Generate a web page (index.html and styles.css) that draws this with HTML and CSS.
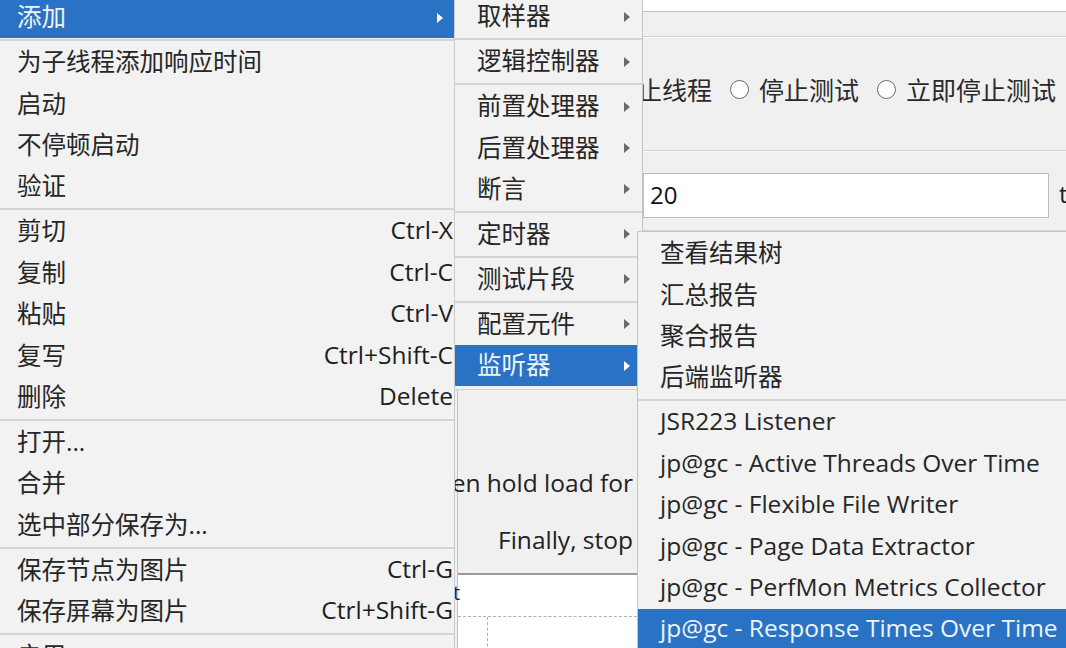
FILE: index.html
```html
<!DOCTYPE html>
<html lang="zh-CN">
<head>
<meta charset="utf-8">
<title>JMeter 菜单</title>
<link rel="stylesheet" href="styles.css">
</head>
<body>
<div class="app">
  <div class="col-hidden"></div>
  <div class="col-mid">
    <div class="mid-text first"><span>Then hold load for</span></div>
    <div class="mid-text second"><span>Finally, stop</span></div>
    <div class="mid-panel">
      <div class="panel-label">t</div>
      <div class="dotted-h"></div>
      <div class="dotted-v"></div>
    </div>
  </div>
  <div class="col-right">
    <div class="field-top"></div>
    <div class="sec sec-radio">
      <span class="rlabel cut">停止线程</span>
      <span class="radio"></span><span class="rlabel">停止测试</span>
      <span class="radio"></span><span class="rlabel">立即停止测试</span>
    </div>
    <div class="sec sec-input">
      <div class="input">20</div>
      <span class="unit">t</span>
    </div>
    <div class="sec sec-rest"></div>
  </div>
</div>

<div class="menu menu-main">
  <div class="item active"><span class="label">添加</span><span class="arrow"></span></div>
  <div class="sep"></div>
  <div class="item"><span class="label">为子线程添加响应时间</span></div>
  <div class="item"><span class="label">启动</span></div>
  <div class="item"><span class="label">不停顿启动</span></div>
  <div class="item"><span class="label">验证</span></div>
  <div class="sep"></div>
  <div class="item"><span class="label">剪切</span><span class="key">Ctrl-X</span></div>
  <div class="item"><span class="label">复制</span><span class="key">Ctrl-C</span></div>
  <div class="item"><span class="label">粘贴</span><span class="key">Ctrl-V</span></div>
  <div class="item"><span class="label">复写</span><span class="key">Ctrl+Shift-C</span></div>
  <div class="item"><span class="label">删除</span><span class="key">Delete</span></div>
  <div class="sep"></div>
  <div class="item"><span class="label">打开...</span></div>
  <div class="item"><span class="label">合并</span></div>
  <div class="item"><span class="label">选中部分保存为...</span></div>
  <div class="sep"></div>
  <div class="item"><span class="label">保存节点为图片</span><span class="key">Ctrl-G</span></div>
  <div class="item"><span class="label">保存屏幕为图片</span><span class="key">Ctrl+Shift-G</span></div>
  <div class="sep"></div>
  <div class="item"><span class="label">启用</span></div>
</div>

<div class="menu menu-sub1">
  <div class="item"><span class="label">取样器</span><span class="arrow"></span></div>
  <div class="sep"></div>
  <div class="item"><span class="label">逻辑控制器</span><span class="arrow"></span></div>
  <div class="sep"></div>
  <div class="item"><span class="label">前置处理器</span><span class="arrow"></span></div>
  <div class="item"><span class="label">后置处理器</span><span class="arrow"></span></div>
  <div class="item"><span class="label">断言</span><span class="arrow"></span></div>
  <div class="sep"></div>
  <div class="item"><span class="label">定时器</span><span class="arrow"></span></div>
  <div class="sep"></div>
  <div class="item"><span class="label">测试片段</span><span class="arrow"></span></div>
  <div class="sep"></div>
  <div class="item"><span class="label">配置元件</span><span class="arrow"></span></div>
  <div class="item active"><span class="label">监听器</span><span class="arrow"></span></div>
</div>

<div class="menu menu-sub2">
  <div class="item"><span class="label">查看结果树</span></div>
  <div class="item"><span class="label">汇总报告</span></div>
  <div class="item"><span class="label">聚合报告</span></div>
  <div class="item"><span class="label">后端监听器</span></div>
  <div class="sep"></div>
  <div class="item"><span class="label">JSR223 Listener</span></div>
  <div class="item"><span class="label">jp@gc - Active Threads Over Time</span></div>
  <div class="item"><span class="label">jp@gc - Flexible File Writer</span></div>
  <div class="item"><span class="label">jp@gc - Page Data Extractor</span></div>
  <div class="item"><span class="label">jp@gc - PerfMon Metrics Collector</span></div>
  <div class="item active"><span class="label">jp@gc - Response Times Over Time</span></div>
</div>
</body>
</html>
```

FILE: styles.css
```css
* { box-sizing: border-box; }

html, body {
  margin: 0;
  padding: 0;
}

body {
  width: 1066px;
  height: 648px;
  overflow: hidden;
  position: relative;
  background: #f0f0f0;
  font-family: "Open Sans", "Noto Sans CJK SC", sans-serif;
  font-size: 24.5px;
  color: #222;
}

/* ---------- background application ---------- */
.app {
  display: flex;
  height: 648px;
}

.col-hidden {
  width: 457px;
  flex: none;
}

.col-mid {
  width: 186px;
  flex: none;
  display: flex;
  flex-direction: column;
  border-left: 1px solid #c4c4c4;
}

.mid-text {
  height: 32px;
  display: flex;
  justify-content: flex-end;
  align-items: center;
  padding-right: 10px;
  padding-bottom: 3px;
  white-space: nowrap;
}

.mid-text.first { margin-top: 468px; }
.mid-text.second { margin-top: 25px; }

.mid-panel {
  margin-top: 16px;
  flex: 1;
  background: #fff;
  border-top: 2px solid #9a9a9a;
  position: relative;
}

.panel-label {
  height: 41px;
  font-size: 20px;
  line-height: 36px;
  margin-left: -5px;
}

.dotted-h {
  border-top: 1px dashed #b0b0b0;
  margin-right: 6px;
}

.dotted-v {
  margin-left: 29px;
  width: 0;
  height: 40px;
  border-left: 1px dashed #b0b0b0;
}

.col-right {
  flex: 1;
  display: flex;
  flex-direction: column;
}

.field-top {
  height: 12px;
  background: #fff;
  border-bottom: 1px solid #c0c0c0;
}

.sec {
  border-top: 1px solid #d2d2d2;
  box-shadow: inset 0 1px 0 #fafafa;
}

.sec-radio {
  margin-top: 24px;
  height: 114px;
  display: flex;
  align-items: center;
  font-size: 25px;
  color: #2a2a2a;
  padding-bottom: 10px;
}

.rlabel.cut { margin-left: -31px; }

.radio {
  width: 19px;
  height: 19px;
  border: 1.5px solid #6a6a6a;
  border-radius: 50%;
  margin-left: 18px;
  margin-right: 10px;
  margin-top: 2px;
  background: #fff;
  flex: none;
}

.sec-input {
  height: 80px;
  display: flex;
  align-items: flex-start;
  padding-top: 22px;
}

.input {
  width: 406px;
  height: 45px;
  background: #fff;
  border: 1px solid #bdbdbd;
  padding-left: 6px;
  padding-bottom: 2px;
  display: flex;
  align-items: center;
  font-size: 24px;
  color: #111;
}

.unit {
  margin-left: 10px;
  line-height: 42px;
}

.sec-rest { flex: 1; }

/* ---------- popup menus ---------- */
.menu {
  position: absolute;
  background: #f2f2f2;
  z-index: 2;
}

.menu-main {
  left: 0;
  top: -3px;
  width: 455px;
  border-right: 1px solid #c8c8c8;
}

.menu-sub1 {
  left: 454px;
  top: -4px;
  width: 189px;
  border-left: 1px solid #cdcdcd;
  border-right: 1px solid #c4c4c4;
  border-bottom: 1px solid #d4d4d4;
  padding-bottom: 3px;
  z-index: 3;
}

.menu-sub2 {
  left: 637px;
  top: 231px;
  width: 460px;
  border-left: 1px solid #c4c4c4;
  border-top: 1px solid #c8c8c8;
  padding-top: 1px;
  z-index: 4;
}

.item {
  height: 41.4px;
  display: flex;
  align-items: center;
  justify-content: space-between;
  white-space: nowrap;
  color: #262626;
  padding-bottom: 4px;
}

.menu-main .item { padding-left: 17px; padding-right: 1px; }
.menu-main .item .arrow { margin-right: 10px; margin-top: 4px; }
.menu-sub1 .item { padding-left: 22px; padding-right: 12px; }
.menu-sub1 .item .arrow { margin-top: 4px; }
.menu-sub2 .item { padding-left: 22px; }

.item.active {
  background: #2a72c3;
  color: #eef4fb;
}

.key {
  color: #1e1e1e;
}

.arrow {
  width: 0;
  height: 0;
  border-top: 5px solid transparent;
  border-bottom: 5px solid transparent;
  border-left: 6px solid #6a6a6a;
}

.item.active .arrow {
  border-left-color: #ffffff;
}

.sep {
  height: 2.8px;
  border-top: 2px solid #d4d4d4;
  margin-top: 0.8px;
}
```
